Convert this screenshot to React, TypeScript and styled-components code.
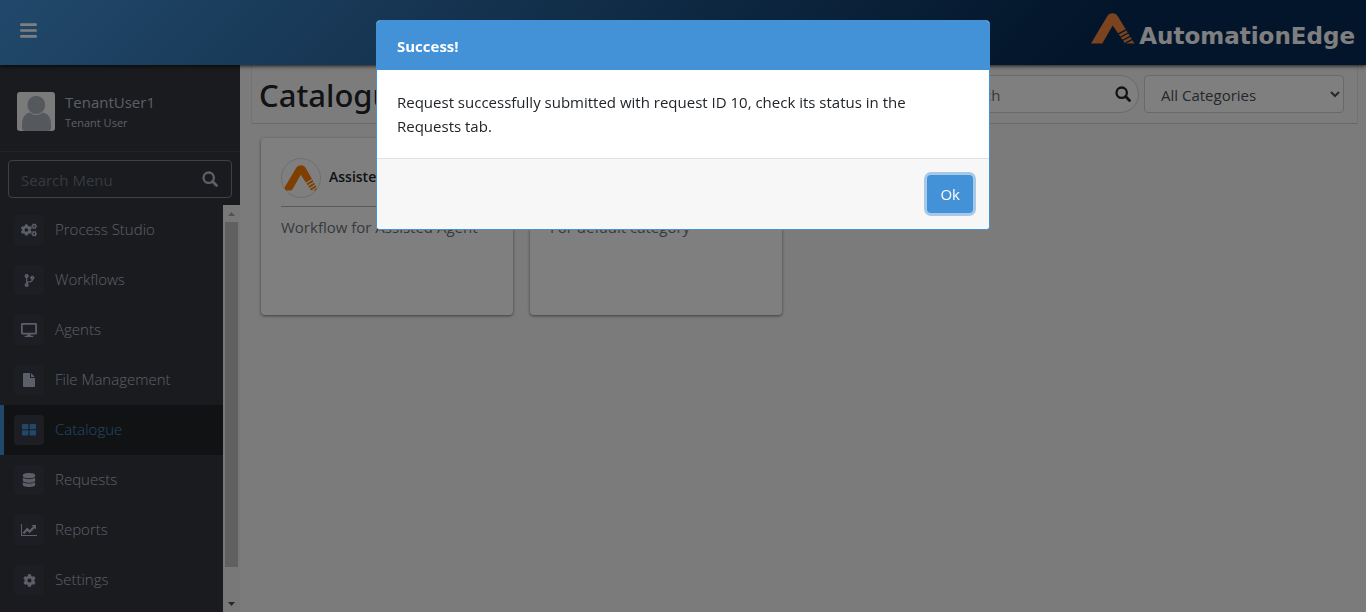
import React from "react";
import styled, { createGlobalStyle, css } from "styled-components";
import {
  FaBars,
  FaCodeBranch,
  FaCog,
  FaCogs,
  FaDatabase,
  FaDesktop,
} from "react-icons/fa";

const blue = "#4391d6";
const sidebarBg = "#34363d";
const sidebarText = "#b8bfce";

const GlobalStyle = createGlobalStyle`
  *, *::before, *::after { box-sizing: border-box; }
  body {
    margin: 0;
    background: #f6f6f6;
    color: #212529;
    font-family: "Open Sans", "Noto Sans", sans-serif;
    font-size: 15px;
    line-height: 24px;
  }
  button, input, select { font: inherit; }
`;

const Page = styled.div`
  display: flex;
  flex-direction: column;
  height: 100vh;
  overflow: hidden;
`;

const TopBar = styled.header`
  position: relative;
  z-index: 1;
  flex: none;
  display: flex;
  align-items: center;
  justify-content: space-between;
  height: 65px;
  padding: 0 11px 0 19px;
  background: linear-gradient(135deg, ${blue} 0%, #062b54 78%, #062b54 100%);
  box-shadow: 0 1px 4px rgba(0, 0, 0, 0.8);
`;

const MenuToggle = styled.button`
  display: flex;
  padding: 0;
  border: 0;
  background: none;
  color: #fff;
  font-size: 19px;
  margin-bottom: 4px;
`;

const Brand = styled.a`
  display: flex;
  align-items: flex-end;
  gap: 4px;
  margin-bottom: 8px;
  color: #fff;
  text-decoration: none;
`;

const BrandName = styled.span`
  font-family: "DejaVu Sans", sans-serif;
  font-size: 23px;
  font-weight: 700;
  line-height: 16px;
`;

const Body = styled.div`
  flex: 1;
  min-height: 0;
  display: flex;
`;

const Sidebar = styled.aside`
  flex: none;
  display: flex;
  flex-direction: column;
  width: 240px;
  background: ${sidebarBg};
  color: ${sidebarText};
`;

const UserPanel = styled.div`
  flex: none;
  display: flex;
  align-items: center;
  gap: 10px;
  height: 87px;
  padding: 6px 16px 0;
  border-bottom: 1px solid #42454d;
`;

const UserText = styled.div`
  display: flex;
  flex-direction: column;
  padding-top: 2px;
`;

const UserName = styled.span`
  font-size: 15px;
  line-height: 22px;
`;

const UserRole = styled.span`
  font-size: 11px;
  line-height: 20px;
`;

const MenuSearch = styled.label`
  flex: none;
  display: flex;
  align-items: center;
  height: 38px;
  margin: 8px 8px 7px;
  padding: 0 13px 0 12px;
  border: 1px solid #80838a;
  border-radius: 4px;
  color: ${sidebarText};
`;

const MenuSearchInput = styled.input`
  flex: 1;
  min-width: 0;
  padding: 2px 0 0;
  border: 0;
  outline: 0;
  background: none;
  color: inherit;
  &::placeholder { color: #6c757d; opacity: 1; }
`;

const MenuArea = styled.div`
  flex: 1;
  min-height: 0;
  display: flex;
`;

const Menu = styled.nav`
  flex: 1;
  overflow: hidden;
`;

const MenuItem = styled.a<{ $active?: boolean }>`
  display: flex;
  align-items: center;
  gap: 11px;
  height: 50px;
  padding-left: 10px;
  border-left: 4px solid transparent;
  color: ${sidebarText};
  font-weight: 300;
  text-decoration: none;
  ${(p) =>
    p.$active &&
    css`
      border-left-color: ${blue};
      background: #222426;
      color: ${blue};
    `}
`;

const MenuLabel = styled.span`
  padding-bottom: 2px;
`;

const IconTile = styled.span`
  display: flex;
  align-items: center;
  justify-content: center;
  width: 30px;
  height: 30px;
  border-radius: 4px;
  background: #3a3c47;
  font-size: 14px;
`;

const ScrollTrack = styled.div`
  flex: none;
  display: flex;
  flex-direction: column;
  align-items: center;
  width: 17px;
  background: #f1f1f1;
`;

const ScrollArrow = styled.span<{ $down?: boolean }>`
  flex: none;
  display: flex;
  align-items: center;
  justify-content: center;
  height: 17px;
  color: ${(p) => (p.$down ? "#505050" : "#a3a3a3")};
`;

const ScrollSpace = styled.div`
  flex: 1;
  display: flex;
  flex-direction: column;
  align-self: stretch;
  padding: 0 2px 28px;
`;

const ScrollThumb = styled.div`
  flex: 1;
  background: #c1c1c1;
`;

const Content = styled.main`
  flex: 1;
  min-width: 0;
  padding: 0 8px 0 11px;
`;

const ContentHeader = styled.div`
  display: flex;
  align-items: center;
  justify-content: space-between;
  height: 59px;
  padding: 0 13px 0 7px;
  border: 1px solid #e6e6e6;
  border-top: 0;
  border-bottom-color: #d2d2d2;
  background: #f8f8f8;
`;

const Title = styled.h1`
  margin: 0;
  padding-top: 2px;
  font-family: "Noto Sans", "Open Sans", sans-serif;
  font-size: 31px;
  font-weight: 500;
  line-height: 38px;
`;

const Filters = styled.div`
  display: flex;
  gap: 5px;
`;

const SearchBox = styled.label`
  display: flex;
  align-items: center;
  width: 205px;
  height: 38px;
  padding: 0 7px 0 18px;
  border: 1px solid #ced4da;
  border-radius: 19px;
  background: #fff;
`;

const SearchInput = styled.input`
  flex: 1;
  min-width: 0;
  padding: 2px 0 0;
  border: 0;
  outline: 0;
  background: none;
  &::placeholder { color: #6c757d; opacity: 1; }
`;

const CategorySelect = styled.select`
  width: 200px;
  height: 38px;
  padding: 2px 0 0 12px;
  border: 1px solid #ced4da;
  border-radius: 4px;
  background: #fff;
  color: #495057;
`;

const CardGrid = styled.section`
  display: grid;
  grid-template-columns: repeat(auto-fill, 252px);
  gap: 17px;
  padding: 14px 10px;
`;

const Card = styled.article`
  height: 177px;
  padding: 20px;
  border-radius: 4px;
  background: #fff;
  box-shadow: 0 1px 3px rgba(0, 0, 0, 0.5);
`;

const CardHead = styled.div`
  display: flex;
  align-items: center;
  gap: 8px;
  padding-bottom: 8px;
  border-bottom: 1px solid #b4b4b4;
`;

const CardIcon = styled.span`
  display: flex;
  align-items: center;
  justify-content: center;
  width: 40px;
  height: 40px;
  border: 1px solid #dcdcdc;
  border-radius: 50%;
`;

const CardTitle = styled.h2`
  margin: 0 0 2px;
  font-size: 14px;
  font-weight: 600;
  line-height: 24px;
`;

const CardText = styled.p`
  margin: 8px 0 0;
  color: #6c757d;
`;

const Backdrop = styled.div`
  position: fixed;
  inset: 0;
  z-index: 2;
  display: flex;
  align-items: flex-start;
  justify-content: center;
  padding: 20px;
  background: rgba(0, 0, 0, 0.5);
`;

const Dialog = styled.div`
  width: 100%;
  max-width: 614px;
  overflow: hidden;
  border: 1px solid ${blue};
  border-radius: 4px;
  background: #fff;
`;

const DialogTitle = styled.h2`
  margin: 0;
  padding: 13px 20px 12px;
  background: ${blue};
  color: #fff;
  font-size: 15px;
  font-weight: 700;
  line-height: 24px;
`;

const DialogBody = styled.p`
  margin: 0;
  padding: 20px;
`;

const DialogFooter = styled.div`
  display: flex;
  justify-content: flex-end;
  padding: 16px;
  border-top: 1px solid #dee2e6;
  background: #f7f7f7;
`;

const OkButton = styled.button`
  height: 38px;
  padding: 0 13px;
  border: 0;
  border-radius: 4px;
  background: ${blue};
  color: #fff;
  box-shadow: 0 0 0 3px rgba(67, 145, 214, 0.45);
`;

function SearchIcon() {
  return (
    <svg width="16" height="16" viewBox="0 0 16 16" fill="none" stroke="currentColor" aria-hidden="true">
      <circle cx="6.7" cy="6.7" r="5.2" strokeWidth="2.3" />
      <path d="M10.6 10.6L14.5 14.5" strokeWidth="2.8" strokeLinecap="round" />
    </svg>
  );
}

function FileIcon() {
  return (
    <svg width="12" height="14" viewBox="0 0 12 14" fill="currentColor" aria-hidden="true">
      <path d="M0 .8Q0 0 .8 0H7V4.2Q7 5 7.8 5H12V13.2Q12 14 11.2 14H.8Q0 14 0 13.2z" />
      <path d="M8 .1L11.8 4H8z" />
    </svg>
  );
}

function GridIcon() {
  return (
    <svg width="14" height="12" viewBox="0 0 14 12" fill="currentColor" aria-hidden="true">
      <rect width="6.4" height="5.2" rx="1" />
      <rect x="7.6" width="6.4" height="5.2" rx="1" />
      <rect y="6.2" width="6.4" height="5.2" rx="1" />
      <rect x="7.6" y="6.2" width="6.4" height="5.2" rx="1" />
    </svg>
  );
}

function ChartIcon() {
  return (
    <svg width="16" height="14" viewBox="0 0 16 14" aria-hidden="true">
      <path d="M0 1h1v11h15v1H0z" fill="currentColor" />
      <path d="M2.4 10.4L6.2 6.2L8.6 8.6L13 4.2" fill="none" stroke="currentColor" strokeWidth="2.2" />
      <path d="M10.4 2H15v4.6z" fill="currentColor" />
    </svg>
  );
}

function Avatar() {
  return (
    <svg width="39" height="39" viewBox="0 0 39 39" aria-hidden="true">
      <rect x="1" width="38" height="39" rx="3" fill="#f4f4f4" />
      <path d="M6 39V32C6 24 11 20.5 14 20.5H26C30 20.5 35 24 35 32V36Q35 39 32 39H9Q6 39 6 36z" fill="#aab2bd" />
      <ellipse cx="20.3" cy="13" rx="9.4" ry="9.6" fill="#aab2bd" stroke="#f4f4f4" />
    </svg>
  );
}

function BrandMark() {
  return (
    <svg width="44" height="31" viewBox="0 0 44 31" aria-hidden="true">
      <path
        d="M0 30.5L16.2 3.2Q18 .3 21.5 .3Q25 .3 26.8 3.2L43.4 30.5H34L21.7 12.4L11.3 30.5z"
        fill="#f6863c"
      />
      <path
        d="M26.5 21.4L35.5 16.6M28.5 24.7L37.6 19.8M30.4 28L39.6 23.2M32 31.4L41.6 26.4"
        stroke="#062b54"
        strokeWidth="1.3"
      />
    </svg>
  );
}

function CardMark() {
  return (
    <svg width="34" height="26" viewBox="0 0 34 26" aria-hidden="true">
      <path
        d="M3.4 25.5Q-.2 25.5 1 21.8L12.4 2.6Q14 .3 17 .3Q20 .3 21.4 2.6L32.4 21.8Q34.2 25.5 30.6 25.5H27L16.8 9.8L9 23.6Q8 25.5 6.6 25.5z"
        fill="#ff7f00"
      />
      <path
        d="M21.5 18.6L29.5 13.8M23 21.2L31 16.4M24.6 24L32.6 19M26.6 26.4L34 21.8"
        stroke="#fff"
        strokeWidth="1.2"
      />
    </svg>
  );
}

const menuItems = [
  { label: "Process Studio", icon: <FaCogs size={16} /> },
  { label: "Workflows", icon: <FaCodeBranch size={13} /> },
  { label: "Agents", icon: <FaDesktop size={16} /> },
  { label: "File Management", icon: <FileIcon /> },
  { label: "Catalogue", icon: <GridIcon />, active: true },
  { label: "Requests", icon: <FaDatabase /> },
  { label: "Reports", icon: <ChartIcon /> },
  { label: "Settings", icon: <FaCog size={13} /> },
];

const workflows = [
  { title: "Assisted Agent", text: "Workflow for Assisted Agent" },
  { title: "Default", text: "For default category" },
];

export default function App() {
  return (
    <>
      <GlobalStyle />
      <Page>
        <TopBar>
          <MenuToggle aria-label="Toggle menu">
            <FaBars />
          </MenuToggle>
          <Brand href="#">
            <BrandMark />
            <BrandName>AutomationEdge</BrandName>
          </Brand>
        </TopBar>
        <Body>
          <Sidebar>
            <UserPanel>
              <Avatar />
              <UserText>
                <UserName>TenantUser1</UserName>
                <UserRole>Tenant User</UserRole>
              </UserText>
            </UserPanel>
            <MenuSearch>
              <MenuSearchInput placeholder="Search Menu" aria-label="Search Menu" />
              <SearchIcon />
            </MenuSearch>
            <MenuArea>
              <Menu>
                {menuItems.map((item) => (
                  <MenuItem key={item.label} href="#" $active={item.active}>
                    <IconTile>{item.icon}</IconTile>
                    <MenuLabel>{item.label}</MenuLabel>
                  </MenuItem>
                ))}
              </Menu>
              <ScrollTrack>
                <ScrollArrow>
                  <svg width="7" height="4" viewBox="0 0 7 4" aria-hidden="true">
                    <path d="M0 4L3.5 0L7 4z" fill="currentColor" />
                  </svg>
                </ScrollArrow>
                <ScrollSpace>
                  <ScrollThumb />
                </ScrollSpace>
                <ScrollArrow $down>
                  <svg width="7" height="4" viewBox="0 0 7 4" aria-hidden="true">
                    <path d="M0 0L3.5 4L7 0z" fill="currentColor" />
                  </svg>
                </ScrollArrow>
              </ScrollTrack>
            </MenuArea>
          </Sidebar>
          <Content>
            <ContentHeader>
              <Title>Catalogue</Title>
              <Filters>
                <SearchBox>
                  <SearchInput placeholder="Search" aria-label="Search" />
                  <SearchIcon />
                </SearchBox>
                <CategorySelect aria-label="Category">
                  <option>All Categories</option>
                </CategorySelect>
              </Filters>
            </ContentHeader>
            <CardGrid>
              {workflows.map((w) => (
                <Card key={w.title}>
                  <CardHead>
                    <CardIcon>
                      <CardMark />
                    </CardIcon>
                    <CardTitle>{w.title}</CardTitle>
                  </CardHead>
                  <CardText>{w.text}</CardText>
                </Card>
              ))}
            </CardGrid>
          </Content>
        </Body>
      </Page>
      <Backdrop>
        <Dialog role="dialog" aria-modal="true" aria-labelledby="dialog-title">
          <DialogTitle id="dialog-title">Success!</DialogTitle>
          <DialogBody>
            Request successfully submitted with request ID 10, check its status in the Requests tab.
          </DialogBody>
          <DialogFooter>
            <OkButton>Ok</OkButton>
          </DialogFooter>
        </Dialog>
      </Backdrop>
    </>
  );
}
